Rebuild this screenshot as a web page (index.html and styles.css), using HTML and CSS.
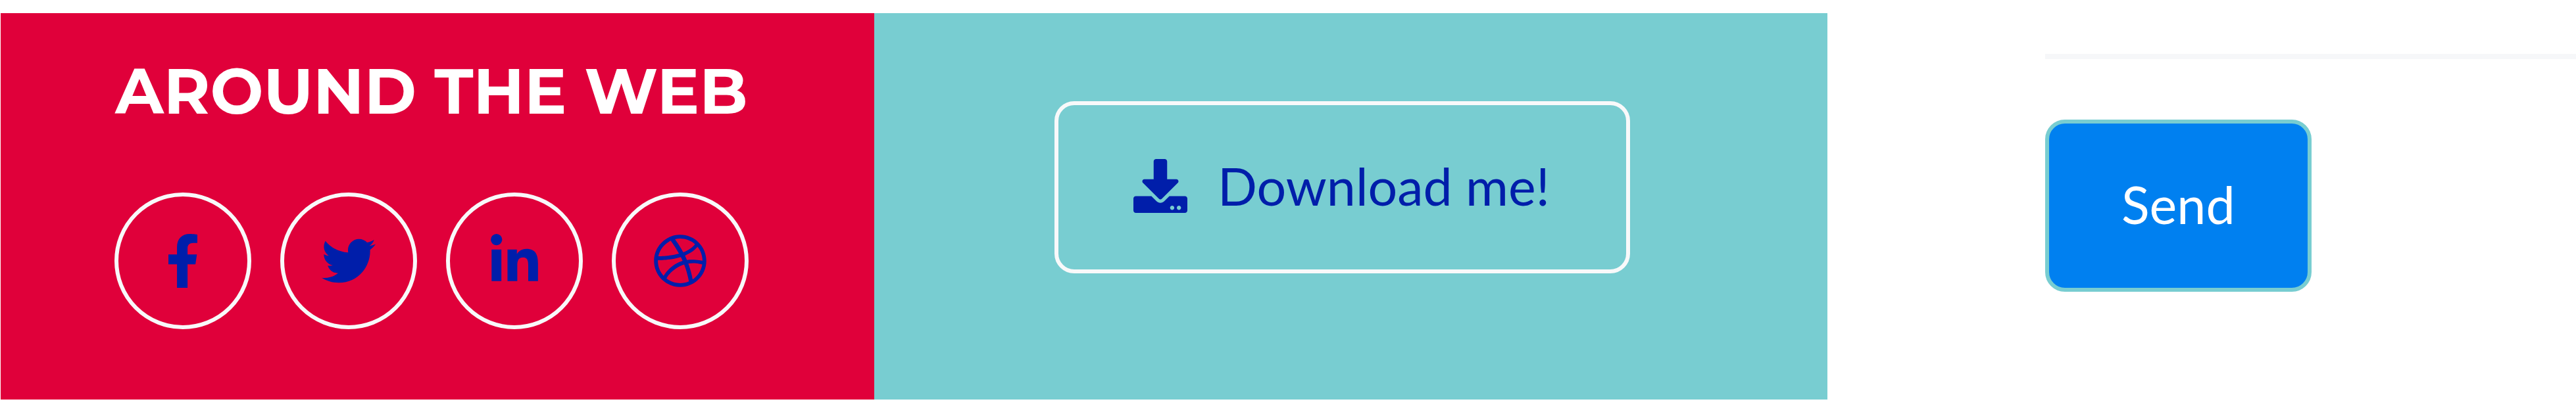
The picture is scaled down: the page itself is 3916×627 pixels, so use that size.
FILE: index.html
```
<!DOCTYPE html>
<html lang="en">
<head>
<meta charset="utf-8">
<meta name="viewport" content="width=device-width, initial-scale=1">
<title>Around the Web</title>
<link rel="stylesheet" href="styles.css">
</head>
<body>
<main class="page">
  <section class="panel social">
    <h2 class="social-title">AROUND THE WEB</h2>
    <nav class="social-links" aria-label="Social networks">
      <a class="social-link" href="#" aria-label="Facebook">
        <svg class="icon" viewBox="-96 0 512 512" aria-hidden="true"><path d="M279.14 288l14.22-92.66h-88.91v-60.13c0-25.35 12.42-50.06 52.24-50.06h40.42V6.26S260.43 0 225.36 0c-73.22 0-121.08 44.38-121.08 124.72v70.62H22.89V288h81.39v224h100.17V288z"/></svg>
      </a>
      <a class="social-link" href="#" aria-label="Twitter">
        <svg class="icon" viewBox="0 0 512 512" aria-hidden="true"><path d="M459.37 151.716c.325 4.548.325 9.097.325 13.645 0 138.72-105.583 298.558-298.558 298.558-59.452 0-114.68-17.219-161.137-47.106 8.447.974 16.568 1.299 25.34 1.299 49.055 0 94.213-16.568 130.274-44.832-46.132-.975-84.792-31.188-98.112-72.772 6.498.974 12.995 1.624 19.818 1.624 9.421 0 18.843-1.3 27.614-3.573-48.081-9.747-84.143-51.98-84.143-102.985v-1.299c13.969 7.797 30.214 12.67 47.431 13.319-28.264-18.843-46.781-51.005-46.781-87.391 0-19.492 5.197-37.36 14.294-52.954 51.655 63.675 129.3 105.258 216.365 109.807-1.624-7.797-2.599-15.918-2.599-24.04 0-57.828 46.782-104.934 104.934-104.934 30.213 0 57.502 12.67 76.67 33.137 23.715-4.548 46.456-13.32 66.599-25.34-7.798 24.366-24.366 44.833-46.132 57.827 21.117-2.273 41.584-8.122 60.426-16.243-14.292 20.791-32.161 39.308-52.628 54.253z"/></svg>
      </a>
      <a class="social-link" href="#" aria-label="LinkedIn">
        <svg class="icon" viewBox="-32 0 512 512" aria-hidden="true"><path d="M100.28 448H7.4V148.9h92.88zM53.79 108.1C24.09 108.1 0 83.5 0 53.8a53.79 53.79 0 0 1 107.58 0c0 29.7-24.1 54.3-53.79 54.3zM447.9 448h-92.68V302.4c0-34.7-.7-79.2-48.29-79.2-48.29 0-55.69 37.7-55.69 76.7V448h-92.78V148.9h89.08v40.8h1.3c12.4-23.5 42.69-48.3 87.88-48.3 94 0 111.28 61.9 111.28 142.3V448z"/></svg>
      </a>
      <a class="social-link" href="#" aria-label="Dribbble">
        <svg class="icon" viewBox="0 0 512 512" aria-hidden="true"><path d="M256 8C119.252 8 8 119.252 8 256s111.252 248 248 248 248-111.252 248-248S392.748 8 256 8zm163.97 114.366c29.503 36.046 47.369 81.957 47.835 131.955-6.984-1.477-77.018-15.682-147.502-6.818-5.752-14.041-11.181-26.393-18.617-41.614 78.321-31.977 113.818-77.482 118.284-83.523zM396.421 97.87c-3.81 5.427-35.697 48.286-111.021 76.519-34.712-63.776-73.185-116.168-79.04-124.008 67.176-16.193 137.966 1.27 190.061 47.489zm-230.48-33.25c5.585 7.659 43.438 60.116 78.537 122.509-99.087 26.313-186.36 25.934-195.834 25.809C62.38 147.205 106.678 92.573 165.941 64.62zM44.17 256.323c0-2.166.043-4.322.108-6.473 9.268.19 111.92 1.513 217.706-30.146 6.064 11.868 11.857 23.915 17.174 35.949-76.599 21.575-146.194 83.527-180.531 142.306C64.794 360.405 44.17 310.73 44.17 256.323zm81.807 167.113c22.127-45.233 82.178-103.622 167.579-132.756 29.74 77.283 42.039 142.053 45.189 160.638-68.112 29.013-150.015 21.053-212.768-27.882zm248.38 8.489c-2.171-12.886-13.446-74.897-41.152-151.033 66.38-10.626 124.7 6.768 131.947 9.055-9.442 58.941-43.273 109.844-90.795 141.978z"/></svg>
      </a>
    </nav>
  </section>
  <section class="panel download">
    <a class="button button-outline" href="#">
      <svg class="icon" viewBox="0 0 512 512" aria-hidden="true"><path d="M216 0h80c13.3 0 24 10.7 24 24v168h87.7c17.8 0 26.7 21.5 14.1 34.1L269.7 378.3c-7.5 7.5-19.8 7.5-27.3 0L90.1 226.1c-12.6-12.6-3.7-34.1 14.1-34.1H192V24c0-13.3 10.7-24 24-24zm296 376v112c0 13.3-10.7 24-24 24H24c-13.3 0-24-10.7-24-24V376c0-13.3 10.7-24 24-24h146.7l49 49c20.1 20.1 52.5 20.1 72.6 0l49-49H488c13.3 0 24 10.7 24 24zm-124 88c0-11-9-20-20-20s-20 9-20 20 9 20 20 20 20-9 20-20zm64 0c0-11-9-20-20-20s-20 9-20 20 9 20 20 20 20-9 20-20z"/></svg>
      <span>Download me!</span>
    </a>
  </section>
  <form class="panel contact">
    <hr class="rule">
    <button class="button button-primary" type="submit">Send</button>
  </form>
</main>
</body>
</html>
```
FILE: styles.css
```
* {
  box-sizing: border-box;
}

body {
  margin: 0;
  background: #fff;
  font-family: Lato, "Liberation Sans", sans-serif;
  font-size: 79px;
  line-height: 120px;
}

.page {
  display: grid;
  grid-template-columns: 1328fr 1449fr 1138fr;
  min-height: 100vh;
  padding: 20px 0 19px 1px;
}

.icon {
  display: block;
  flex: none;
  width: 82px;
  height: 82px;
  fill: currentColor;
}

.social {
  display: flex;
  flex-direction: column;
  align-items: center;
  gap: 96px;
  padding: 61px 18px 0 0;
  background: #e0003a;
  color: #fff;
}

.social-title {
  margin: 0;
  font-family: Montserrat, Inter, sans-serif;
  font-size: 96px;
  font-weight: 700;
  line-height: 116px;
  white-space: nowrap;
}

.social-links {
  display: flex;
  gap: 44px;
}

.social-link {
  display: flex;
  align-items: center;
  justify-content: center;
  width: 208px;
  height: 208px;
  border: 6px solid #f8f9fa;
  border-radius: 50%;
  color: #001eaa;
}

.download {
  display: flex;
  justify-content: center;
  align-items: flex-start;
  padding: 134px 26px 0 0;
  background: #78cdd1;
}

.button {
  display: flex;
  align-items: center;
  height: 262px;
  padding: 0 112px 6px;
  border: 6px solid;
  border-radius: 30px;
  font: inherit;
  text-decoration: none;
  white-space: nowrap;
}

.button-outline {
  gap: 46px;
  padding: 0 116px 4px 114px;
  border-color: #f8f9fa;
  color: #001eaa;
}

.button-primary {
  padding: 0 110px 4px;
  border-color: #78cdd1;
  background: #0080f0;
  color: #fff;
}

.contact {
  display: flex;
  flex-direction: column;
  align-items: flex-start;
  gap: 92px;
  padding: 62px 0 0 331px;
}

.rule {
  width: 100%;
  height: 8px;
  margin: 0;
  border: 0;
  background: #f6f7f9;
}
```
